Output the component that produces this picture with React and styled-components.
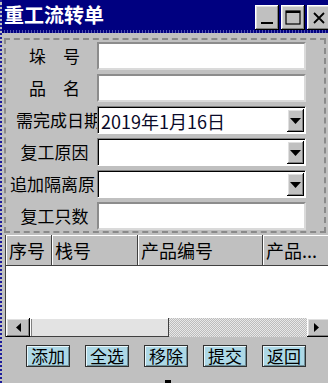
import styled, { createGlobalStyle } from 'styled-components';

const GlobalStyle = createGlobalStyle`
  html, body {
    margin: 0;
    padding: 0;
    background: #c0c0c0;
    overflow: hidden;
  }
  body {
    font-family: "Noto Sans CJK SC", "Liberation Sans", sans-serif;
  }
`;

const Window = styled.div`
  width: 331px;
  height: 383px;
  box-sizing: border-box;
  background: #c0c0c0;
  border-left: 2px dotted #1c1c9c;
  display: flex;
  flex-direction: column;
`;

const TitleBar = styled.div`
  height: 30px;
  background: #000080;
  display: flex;
  align-items: flex-end;
  padding-left: 2px;
`;

const Title = styled.div`
  align-self: center;
  color: #fff;
  font-size: 20px;
  font-weight: 700;
  line-height: 30px;
  white-space: nowrap;
`;

const Controls = styled.div`
  margin-left: auto;
  display: flex;
  gap: 2px;
`;

const bevel = `
  background: #c0c0c0;
  box-shadow: inset -1px -1px #000, inset 1px 1px #fff,
    inset -2px -2px #808080, inset 2px 2px #dfdfdf;
`;

const CtrlButton = styled.div`
  ${bevel}
  width: 24px;
  height: 25px;
  display: flex;
  align-items: center;
  justify-content: center;
`;

const FrameStrip = styled.div`
  height: 3px;
  background: repeating-linear-gradient(90deg, #000080 0 2px, #5050b0 2px 3px);
`;

const Body = styled.div`
  padding: 5px 0 0 2px;
  display: flex;
  flex-direction: column;
`;

const Group = styled.div`
  width: 322px;
  box-sizing: border-box;
  border: 2px dashed #8a8a8a;
  padding: 2px 0 1px 0;
  display: grid;
  grid-template-columns: 91px 209px;
  row-gap: 4px;
`;

const Label = styled.div`
  height: 28px;
  line-height: 28px;
  font-size: 17px;
  color: #000;
  text-align: center;
  white-space: nowrap;
  padding-left: ${(p) => p.$shift || 6}px;
  box-sizing: border-box;
`;

const Field = styled.div`
  height: 28px;
  box-sizing: border-box;
  background: #fff;
  border: 2px solid;
  border-color: #8c8c8c #dadada #dadada #8c8c8c;
`;

const Combo = styled.div`
  height: 28px;
  box-sizing: border-box;
  background: #fff;
  border: 1px solid;
  border-color: #808080 #fff #fff #808080;
  box-shadow: inset 1px 1px #000;
  display: flex;
  align-items: center;
  padding: 2px 1px 1px 2px;
`;

const ComboText = styled.div`
  flex: 1;
  font-size: 18px;
  line-height: 24px;
  color: #0a0a2a;
  padding-left: 1px;
  white-space: nowrap;
`;

const DropButton = styled.div`
  ${bevel}
  width: 17px;
  height: 100%;
  display: flex;
  align-items: center;
  justify-content: center;
`;

const Table = styled.div`
  margin: 2px 0 0 1px;
  width: 330px;
  border-left: 1px solid #404040;
  display: flex;
  flex-direction: column;
`;

const HeaderRow = styled.div`
  display: flex;
  height: 31px;
`;

const HeaderCell = styled.div`
  width: ${(p) => p.$w}px;
  flex: ${(p) => (p.$w ? 'none' : 1)};
  background: #c0c0c0;
  box-shadow: inset -1px -1px #404040, inset 1px 1px #fff;
  font-size: 18px;
  line-height: 30px;
  padding-left: 3px;
  box-sizing: border-box;
  white-space: nowrap;
  overflow: hidden;
`;

const TableBody = styled.div`
  height: 52px;
  background: #fff;
`;

const ScrollBar = styled.div`
  display: flex;
  height: 19px;
`;

const ScrollArrow = styled.div`
  ${bevel}
  width: ${(p) => p.$w}px;
  flex: ${(p) => (p.$w ? 'none' : 1)};
  display: flex;
  align-items: center;
  justify-content: ${(p) => (p.$w ? 'center' : 'flex-start')};
  padding-left: ${(p) => (p.$w ? 0 : 7)}px;
`;

const Thumb = styled.div`
  width: 139px;
  background: #e3e3e3;
  box-shadow: inset -1px -1px #404040, inset 1px 1px #fff, inset 2px 0 #808080;
`;

const Track = styled.div`
  width: 138px;
  background-color: #c8c8c8;
  background-image: repeating-conic-gradient(#e8e8e8 0 25%, #bcbcbc 0 50%);
  background-size: 2px 2px;
`;

const ButtonRow = styled.div`
  display: flex;
  gap: 15px;
  margin-top: 8px;
  padding-left: 22px;
`;

const ActionButton = styled.div`
  height: 22px;
  box-sizing: border-box;
  padding: 0 4px;
  background: #add8e6;
  border: 1px solid #303030;
  box-shadow: inset 1px 1px #e8f6fa, inset -1px -1px #6f8f99;
  font-size: 17px;
  line-height: 20px;
  color: #000;
  white-space: nowrap;
`;

const Mark = styled.div`
  margin: 13px 0 0 161px;
  width: 6px;
  height: 3px;
  background: #000;
`;

const TriangleDown = () => (
  <svg width="11" height="6" viewBox="0 0 11 6">
    <path d="M0 0h11L5.5 6z" fill="#000" />
  </svg>
);

const TriangleSide = ({ dir }) => (
  <svg width="5" height="9" viewBox="0 0 5 9">
    <path d={dir === 'left' ? 'M5 0v9L0 4.5z' : 'M0 0v9l5-4.5z'} fill="#000" />
  </svg>
);

const fields = [
  { label: '垛　号', kind: 'field' },
  { label: '品　名', kind: 'field' },
  { label: '需完成日期', kind: 'combo', value: '2019年1月16日', shift: 10 },
  { label: '复工原因', kind: 'combo' },
  { label: '追加隔离原', kind: 'combo', shift: 2 },
  { label: '复工只数', kind: 'field' },
];

const columns = [
  { title: '序号', w: 46 },
  { title: '栈号', w: 86 },
  { title: '产品编号', w: 125 },
  { title: '产品...' },
];

const actions = ['添加', '全选', '移除', '提交', '返回'];

export default function App() {
  return (
    <>
      <GlobalStyle />
      <Window>
        <TitleBar>
          <Title>重工流转单</Title>
          <Controls>
            <CtrlButton>
              <svg width="14" height="14" viewBox="0 0 14 14">
                <rect x="1" y="11" width="12" height="2" fill="#000" />
              </svg>
            </CtrlButton>
            <CtrlButton>
              <svg width="16" height="15" viewBox="0 0 16 15">
                <rect x="1" y="1" width="14" height="13" fill="none" stroke="#000" strokeWidth="1.2" />
                <rect x="1" y="1" width="14" height="2" fill="#000" />
              </svg>
            </CtrlButton>
            <CtrlButton>
              <svg width="14" height="14" viewBox="0 0 14 14">
                <path d="M2 2l10 10M12 2L2 12" stroke="#000" strokeWidth="1.8" />
              </svg>
            </CtrlButton>
          </Controls>
        </TitleBar>
        <FrameStrip />
        <Body>
          <Group>
            {fields.map((f) => (
              <>
                <Label key={f.label + 'l'} $shift={f.shift}>
                  {f.label}
                </Label>
                {f.kind === 'field' ? (
                  <Field key={f.label + 'f'} />
                ) : (
                  <Combo key={f.label + 'c'}>
                    <ComboText>{f.value}</ComboText>
                    <DropButton>
                      <TriangleDown />
                    </DropButton>
                  </Combo>
                )}
              </>
            ))}
          </Group>
          <Table>
            <HeaderRow>
              {columns.map((c) => (
                <HeaderCell key={c.title} $w={c.w}>
                  {c.title}
                </HeaderCell>
              ))}
            </HeaderRow>
            <TableBody />
            <ScrollBar>
              <ScrollArrow $w={24}>
                <TriangleSide dir="left" />
              </ScrollArrow>
              <Thumb />
              <Track />
              <ScrollArrow>
                <TriangleSide dir="right" />
              </ScrollArrow>
            </ScrollBar>
          </Table>
          <ButtonRow>
            {actions.map((a) => (
              <ActionButton key={a}>{a}</ActionButton>
            ))}
          </ButtonRow>
          <Mark />
        </Body>
      </Window>
    </>
  );
}
